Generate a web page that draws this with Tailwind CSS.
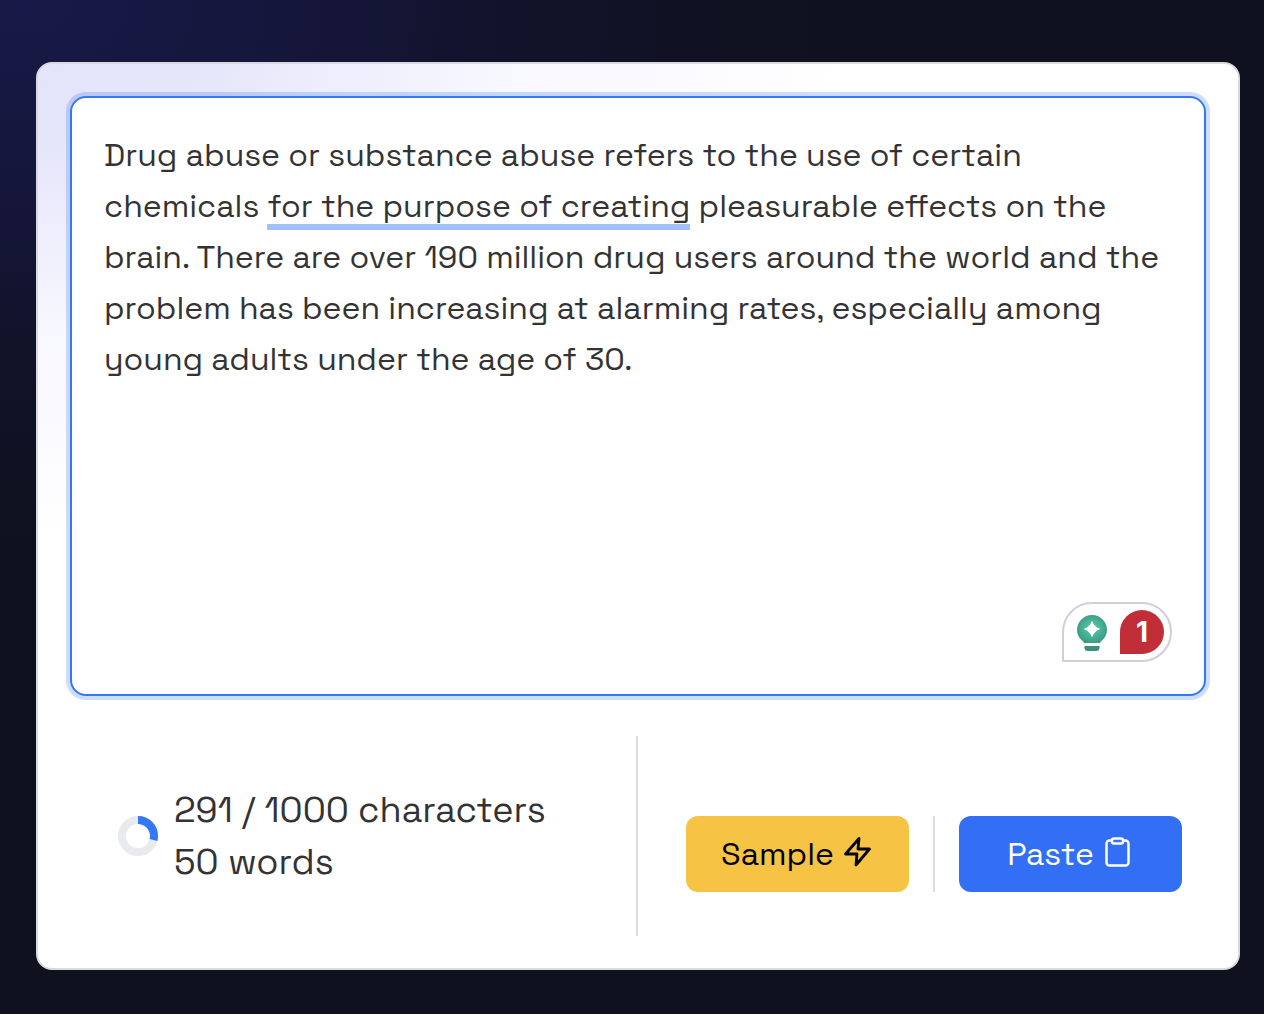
<!DOCTYPE html>
<html lang="en">
<head>
  <meta charset="UTF-8" />
  <meta name="viewport" content="width=device-width, initial-scale=1" />
  <title>Text Editor</title>
  <script src="https://cdn.jsdelivr.net/npm/@tailwindcss/browser@4"></script>
</head>
<body class="min-h-screen bg-[#0f111e] bg-[radial-gradient(ellipse_820px_560px_at_20px_0px,#181948_0%,#15163a_35%,#11132a_60%,#0f111e_100%)] bg-no-repeat pt-[62px] pr-6 pb-11 pl-9 font-['Space_Grotesk','Inter',sans-serif] text-[#333333]">
  <main class="rounded-2xl border-2 border-[#d9d9de] bg-white bg-[radial-gradient(ellipse_800px_480px_at_20px_0px,#e3e3fa_0%,#e7e7fb_20%,#f7f7fe_55%,#ffffff_100%)] bg-no-repeat p-8">

    <!-- Editor -->
    <div class="relative">
      <textarea aria-label="Your text" spellcheck="false" class="block h-[600px] w-full resize-none rounded-2xl border-2 border-[#3478f6] bg-white px-8 py-8 text-[32px] leading-[51px] ring-4 ring-[#3478f6]/25 outline-none">Drug abuse or substance abuse refers to the use of certain chemicals for the purpose of creating pleasurable effects on the brain. There are over 190 million drug users around the world and the problem has been increasing at alarming rates, especially among young adults under the age of 30.</textarea>
      <!-- suggestion underline -->
      <span class="pointer-events-none absolute top-32 left-[197px] h-[6px] w-[423px] bg-[#a2c0fb]"></span>

      <!-- assistant badge -->
      <div class="absolute right-[34px] bottom-[34px] flex h-[60px] w-[110px] items-center justify-between rounded-[30px] rounded-bl-none border-2 border-[#cdcfdd] bg-white pr-[6px] pl-3">
        <svg class="h-10 w-8" viewBox="0 0 32 40" aria-hidden="true">
          <defs>
            <radialGradient id="bulb" cx="50%" cy="48%" r="58%">
              <stop offset="35%" stop-color="#4dbc9f" />
              <stop offset="100%" stop-color="#3b947f" />
            </radialGradient>
          </defs>
          <path fill="url(#bulb)" d="M16 3a15 15 0 0 0-15 15c0 4.500 2 7.500 4.500 10 1.200 1.200 2.200 2 2.800 3h15.400c.6-1 1.600-1.800 2.800-3 2.500-2.500 4.500-5.500 4.500-10A15 15 0 0 0 16 3z" />
          <path fill="#fff" stroke="#fff" stroke-width="1" stroke-linejoin="round" d="M16 9.500Q17.500 15.500 23.500 17 17.500 18.500 16 24.500 14.500 18.500 8.500 17 14.500 15.500 16 9.500z" />
          <path fill="#fff" d="M16 11 19.200 13.800 22 17 19.200 20.200 16 23 12.800 20.200 10 17 12.800 13.800z" />
          <path fill="#3b8f7d" d="M8.500 34h15v1.500a3.500 3.500 0 0 1-3.500 3.500h-8a3.500 3.500 0 0 1-3.500-3.500z" />
        </svg>
        <button type="button" class="size-11 rounded-full rounded-bl-none bg-[#c12e38] font-['Inter',sans-serif] text-[28px] font-bold text-white">1</button>
      </div>
    </div>

    <!-- Footer -->
    <div class="mt-10 grid grid-cols-2">
      <div class="flex h-[200px] items-center gap-4 border-r-2 border-[#dcdcdf] pl-12">
        <svg class="size-10 -rotate-90" viewBox="0 0 40 40" aria-hidden="true">
          <circle cx="20" cy="20" r="16" fill="none" stroke="#e9eaee" stroke-width="8" />
          <circle cx="20" cy="20" r="16" fill="none" stroke="#3478f6" stroke-width="8" pathLength="1000" stroke-dasharray="291 709" />
        </svg>
        <p class="text-[36px] leading-[52px] whitespace-nowrap">291 / 1000 characters<br />50 words</p>
      </div>
      <div class="flex items-start gap-6 pt-20 pr-6 pl-12">
        <button type="button" class="flex h-[76px] flex-1 items-center justify-center gap-2 rounded-xl bg-[#f6c344] text-[32px] text-black">
          Sample
          <svg class="mb-1 size-8" viewBox="0 0 32 32" fill="none" stroke="currentColor" stroke-width="2.800" stroke-linejoin="round" aria-hidden="true">
            <path d="M17 2.500 3.500 18H15l-1 11 13.500-16H16z" />
          </svg>
        </button>
        <div class="h-[76px] w-[2px] bg-[#dcdcdf]"></div>
        <button type="button" class="flex h-[76px] flex-1 items-center justify-center gap-2 rounded-xl bg-[#326ff5] text-[32px] text-white">
          Paste
          <svg class="mb-1 size-8" viewBox="0 0 32 32" fill="none" stroke="currentColor" stroke-width="2.500" stroke-linejoin="round" aria-hidden="true">
            <path d="M10 4.500H7.500a3 3 0 0 0-3 3v19a3 3 0 0 0 3 3h16a3 3 0 0 0 3-3v-19a3 3 0 0 0-3-3H21" />
            <rect x="10" y="2.500" width="11" height="5" rx="2" />
          </svg>
        </button>
      </div>
    </div>
  </main>
</body>
</html>
